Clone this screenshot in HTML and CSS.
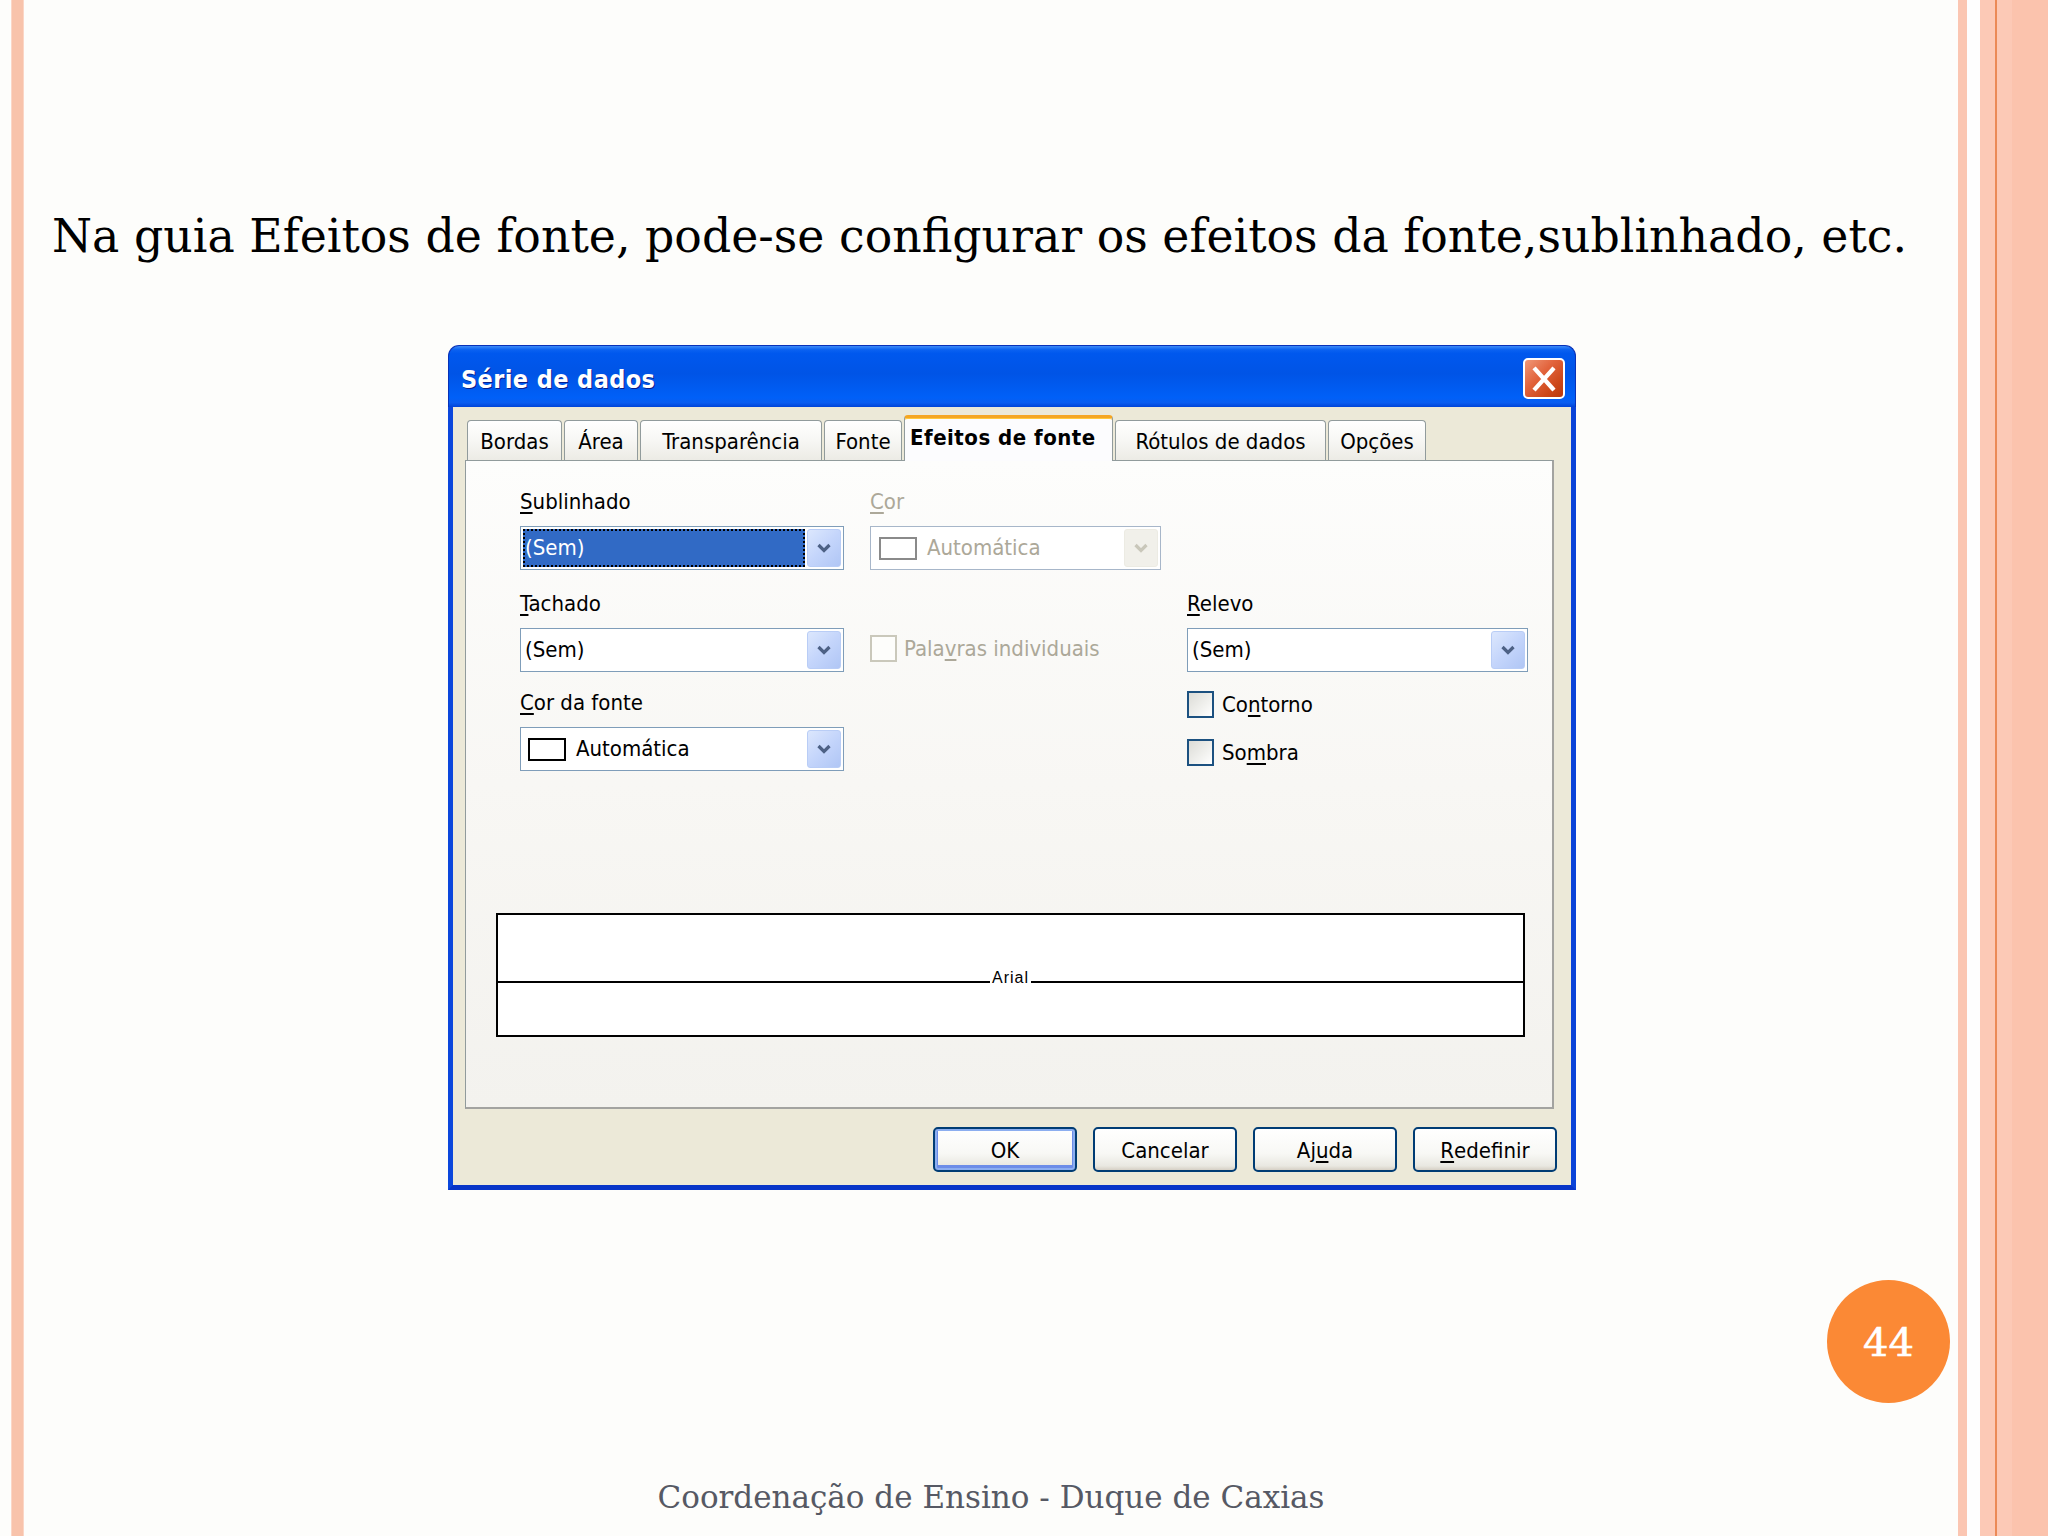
FILE: index.html
```html
<!DOCTYPE html>
<html lang="pt">
<head>
<meta charset="utf-8">
<title>Série de dados</title>
<link rel="stylesheet" href="styles.css">
</head>
<body>
<div class="slide">
  <h1 class="heading">Na guia Efeitos de fonte, pode-se configurar os efeitos da fonte,sublinhado, etc.</h1>

  <div class="dialog">
    <div class="titlebar">
      <span class="title">Série de dados</span>
      <div class="close">
        <svg viewBox="0 0 40 38" width="40" height="38"><path d="M11 9 L29 29 M29 9 L11 29" stroke="#fff" stroke-width="4.5" stroke-linecap="square" fill="none"/></svg>
      </div>
    </div>
    <div class="dbody">
      <div class="tabs">
        <div class="tab w-bordas">Bordas</div>
        <div class="tab w-area">Área</div>
        <div class="tab w-transp">Transparência</div>
        <div class="tab w-fonte">Fonte</div>
        <div class="tab active w-efeitos">Efeitos de fonte</div>
        <div class="tab w-rotulos">Rótulos de dados</div>
        <div class="tab w-opcoes">Opções</div>
      </div>
      <div class="panel">
        <div class="grid">
          <div class="lbl c1 r1"><u>S</u>ublinhado</div>
          <div class="lbl dis c2 r1"><u>C</u>or</div>

          <div class="combo first c1 r2">
            <div class="val sel">(Sem)</div>
            <div class="dd"><svg viewBox="0 0 16 12" width="16" height="12"><path d="M2.5 3 L8 8.5 L13.5 3" stroke="#4d6185" stroke-width="3.2" fill="none"/></svg></div>
          </div>
          <div class="combo first disabled c2 r2">
            <span class="swatch"></span>
            <div class="val">Automática</div>
            <div class="dd"><svg viewBox="0 0 16 12" width="16" height="12"><path d="M2.5 3 L8 8.5 L13.5 3" stroke="#c9c7ba" stroke-width="3.2" fill="none"/></svg></div>
          </div>

          <div class="lbl c1 r3"><u>T</u>achado</div>
          <div class="lbl c3 r3"><u>R</u>elevo</div>

          <div class="combo c1 r4">
            <div class="val">(Sem)</div>
            <div class="dd"><svg viewBox="0 0 16 12" width="16" height="12"><path d="M2.5 3 L8 8.5 L13.5 3" stroke="#4d6185" stroke-width="3.2" fill="none"/></svg></div>
          </div>
          <div class="check dis c2 r4 pal"><span class="box"></span><span>Pala<u>v</u>ras individuais</span></div>
          <div class="combo c3 r4">
            <div class="val">(Sem)</div>
            <div class="dd"><svg viewBox="0 0 16 12" width="16" height="12"><path d="M2.5 3 L8 8.5 L13.5 3" stroke="#4d6185" stroke-width="3.2" fill="none"/></svg></div>
          </div>

          <div class="lbl c1 r5"><u>C</u>or da fonte</div>
          <div class="check c3 r5"><span class="box"></span><span>Co<u>n</u>torno</span></div>

          <div class="combo c1 r6">
            <span class="swatch dark"></span>
            <div class="val">Automática</div>
            <div class="dd"><svg viewBox="0 0 16 12" width="16" height="12"><path d="M2.5 3 L8 8.5 L13.5 3" stroke="#4d6185" stroke-width="3.2" fill="none"/></svg></div>
          </div>
          <div class="check c3 r6 som"><span class="box"></span><span>So<u>m</u>bra</span></div>
        </div>

        <div class="preview">
          <div class="pline">
            <span class="rule"></span>
            <span class="ptext">Arial</span>
            <span class="rule"></span>
          </div>
        </div>
      </div>
      <div class="buttons">
        <div class="btn default">OK</div>
        <div class="btn">Cancelar</div>
        <div class="btn">Aj<u>u</u>da</div>
        <div class="btn"><u>R</u>edefinir</div>
      </div>
    </div>
  </div>

  <div class="footer">Coordenação de Ensino - Duque de Caxias</div>
  <div class="pagenum">44</div>
</div>
</body>
</html>
```

FILE: styles.css
```css
html, body {
  margin: 0;
  padding: 0;
}
body {
  width: 2048px;
  height: 1536px;
  overflow: hidden;
  background: #fdfdfb;
}
.slide {
  position: relative;
  width: 2048px;
  height: 1536px;
  box-sizing: border-box;
  padding: 206px 90px 0 24px;
  display: flex;
  flex-direction: column;
  background: linear-gradient(to right,
    #fdfdfb 0, #fdfdfb 11px,
    #fbd6c6 11px, #fbd6c6 12px,
    #f8c3ab 12px, #f8c3ab 23px,
    #fbd6c6 23px, #fbd6c6 24px,
    #fdfdfb 24px, #fdfdfb 1958px,
    #fbc6b2 1958px, #fbc6b2 1967px,
    #fefefe 1967px, #fefefe 1980px,
    #fcc9b6 1980px, #fcc9b6 1995px,
    #eb8a57 1995px, #eb8a57 1997px,
    #fcc9b6 1997px, #fcc9b6 2012px,
    #fbc3ad 2012px, #fbc3ad 2048px);
}
.heading {
  margin: 0 0 0 28px;
  font-family: "DejaVu Serif", "Liberation Serif", serif;
  font-weight: normal;
  font-size: 45.8px;
  line-height: 60px;
  color: #000;
  white-space: nowrap;
}

/* ---------- dialog ---------- */
.dialog {
  margin: 79px 0 0 424px;
  width: 1128px;
  font-family: "DejaVu Sans Condensed", "Liberation Sans", sans-serif;
  font-size: 22px;
  color: #000;
}
.titlebar {
  height: 62px;
  box-sizing: border-box;
  border-radius: 11px 11px 0 0;
  background: linear-gradient(to bottom,
    #3d8bf7 0, #0b62f1 6%, #0058ee 12%, #0054e6 45%, #0060f8 85%, #0a5df0 93%, #0044d8 100%);
  border: 1px solid #0831b8;
  border-bottom: none;
  display: flex;
  align-items: center;
  justify-content: space-between;
  padding: 0 10px 0 12px;
}
.title {
  font-family: "DejaVu Sans Condensed", "Liberation Sans", sans-serif;
  font-weight: bold;
  font-size: 25px;
  color: #fff;
  letter-spacing: 0.4px;
  text-shadow: 1px 1px 0 #0a1e8c;
  padding-top: 6px;
}
.close {
  width: 42px;
  height: 41px;
  box-sizing: border-box;
  border: 2px solid #fff;
  border-radius: 5px;
  background: linear-gradient(135deg, #f09878 0%, #e2643d 40%, #cc4719 75%, #b8390f 100%);
  display: flex;
  align-items: center;
  justify-content: center;
  margin-top: 4px;
}
.close svg { display: block; }

.dbody {
  background: #ece9d8;
  border: 5px solid #0a43d8;
  border-top: none;
  border-left-color: #0b47dc;
  border-bottom-color: #0835c8;
  padding: 8px 17px 13px 12px;
}

/* ---------- tabs ---------- */
.tabs {
  height: 45px;
  display: flex;
  align-items: flex-end;
  gap: 2px;
  padding-left: 2px;
  position: relative;
  z-index: 2;
}
.tab {
  height: 40px;
  box-sizing: border-box;
  border: 1px solid #919b9c;
  border-bottom: none;
  border-radius: 4px 4px 0 0;
  background: linear-gradient(to bottom, #ffffff 0%, #f7f7f4 50%, #ecebe5 100%);
  display: flex;
  align-items: center;
  justify-content: center;
  white-space: nowrap;
  padding-top: 2px;
}
.tab.active {
  height: 46px;
  margin-bottom: -1px;
  background: #fcfcfe;
  border-top: 3px solid #f5a623;
  box-shadow: inset 0 1px 0 #ffc83c;
  font-weight: bold;
  letter-spacing: 0.5px;
  justify-content: flex-start;
  padding: 0 0 4px 5px;
}
.w-bordas { width: 95px; }
.w-area { width: 74px; }
.w-transp { width: 182px; }
.w-fonte { width: 78px; }
.w-efeitos { width: 209px; }
.w-rotulos { width: 211px; }
.w-opcoes { width: 98px; }

/* ---------- panel ---------- */
.panel {
  height: 649px;
  box-sizing: border-box;
  border: 1px solid #919b9c;
  border-right: 2px solid #a3a3a0;
  border-bottom: 2px solid #a3a3a0;
  background: linear-gradient(to bottom, #fdfdfc 0%, #f8f7f4 50%, #f3f2ee 100%);
  display: flex;
  flex-direction: column;
  position: relative;
  z-index: 1;
}
.grid {
  display: grid;
  grid-template-columns: 324px 291px 341px;
  column-gap: 26px;
  padding: 29px 0 0 54px;
  align-items: start;
}
.c1 { grid-column: 1; }
.c2 { grid-column: 2; }
.c3 { grid-column: 3; }
.r1 { grid-row: 1; }
.r2 { grid-row: 2; }
.r3 { grid-row: 3; }
.r4 { grid-row: 4; }
.r5 { grid-row: 5; }
.r6 { grid-row: 6; }

.lbl {
  height: 24px;
  line-height: 24px;
  margin-bottom: 12px;
  white-space: nowrap;
}
.dis { color: #aca899; }
u {
  text-decoration-thickness: 2px;
  text-underline-offset: 3px;
}

.combo {
  height: 44px;
  box-sizing: border-box;
  margin-bottom: 19px;
  border: 1px solid #7f9db9;
  background: #fff;
  display: flex;
  align-items: center;
  padding: 2px;
}
.combo.first { margin-bottom: 22px; }
.combo .val {
  flex: 1;
  height: 38px;
  line-height: 38px;
  padding-left: 2px;
  white-space: nowrap;
}
.combo .val.sel {
  background: #316ac5;
  color: #fff;
  outline: 2px dotted #000;
  outline-offset: -2px;
  margin-right: 2px;
}
.dd {
  width: 34px;
  height: 38px;
  box-sizing: border-box;
  border-radius: 3px;
  border: 1px solid #b9cdf6;
  background: linear-gradient(135deg, #dce7fd 0%, #c4d5fb 50%, #b0c6f5 100%);
  display: flex;
  align-items: center;
  justify-content: center;
}
.dd svg { display: block; }
.combo.disabled {
  border-color: #a7b6c9;
  color: #aca899;
}
.combo.disabled .dd {
  background: #f1f0ea;
  border-color: #ecebe3;
}
.swatch {
  width: 38px;
  height: 23px;
  box-sizing: border-box;
  border: 2px solid #8a8a8a;
  background: #fff;
  margin: 0 8px 0 6px;
  flex: none;
}
.swatch.dark { border-color: #000; margin-left: 5px; }

.check {
  display: flex;
  align-items: center;
  gap: 8px;
  white-space: nowrap;
}
.check .box {
  width: 27px;
  height: 27px;
  box-sizing: border-box;
  border: 2px solid #1c5180;
  background: linear-gradient(135deg, #dcdcd7 0%, #f1f1ee 60%, #ffffff 100%);
}
.check.dis .box {
  border-color: #cac8bb;
  background: #fdfdfb;
}
.check.pal { margin-top: 7px; gap: 7px; }
.check.som { margin-top: 12px; }

/* ---------- preview ---------- */
.preview {
  margin: auto 27px 70px 30px;
  height: 124px;
  box-sizing: border-box;
  border: 2px solid #000;
  background: #fff;
  padding-top: 52px;
}
.pline {
  display: flex;
  align-items: flex-end;
  height: 16px;
}
.rule {
  flex: 1;
  border-bottom: 2px solid #000;
}
.ptext {
  font-family: "Liberation Sans", sans-serif;
  font-size: 16px;
  line-height: 15px;
  letter-spacing: 1px;
  padding: 0 2px;
  transform: translateY(2px);
}

/* ---------- buttons ---------- */
.buttons {
  margin-top: 18px;
  display: flex;
  justify-content: flex-end;
  gap: 16px;
  padding-right: 0;
  margin-right: -3px;
}
.btn {
  width: 144px;
  height: 45px;
  box-sizing: border-box;
  border: 2px solid #003c74;
  border-radius: 5px;
  background: linear-gradient(to bottom, #ffffff 0%, #f8f8f5 60%, #e9e8e1 90%, #d6d0c5 100%);
  display: flex;
  align-items: center;
  justify-content: center;
  padding-top: 2px;
}
.btn.default {
  box-shadow: inset 0 0 0 2px #8caef0, inset 0 -2px 0 3px #6d8de8;
}

/* ---------- footer ---------- */
.footer {
  margin-top: auto;
  margin-bottom: 19px;
  text-align: center;
  font-family: "DejaVu Serif", "Liberation Serif", serif;
  font-size: 31px;
  line-height: 40px;
  color: #565964;
}
.pagenum {
  position: absolute;
  left: 1827px;
  top: 1280px;
  width: 123px;
  height: 123px;
  border-radius: 50%;
  background: #fb8935;
  color: #fff;
  font-family: "DejaVu Serif", "Liberation Serif", serif;
  font-size: 40px;
  font-weight: normal;
  -webkit-text-stroke: 0.6px #fff;
  display: flex;
  align-items: center;
  justify-content: center;
}
```
